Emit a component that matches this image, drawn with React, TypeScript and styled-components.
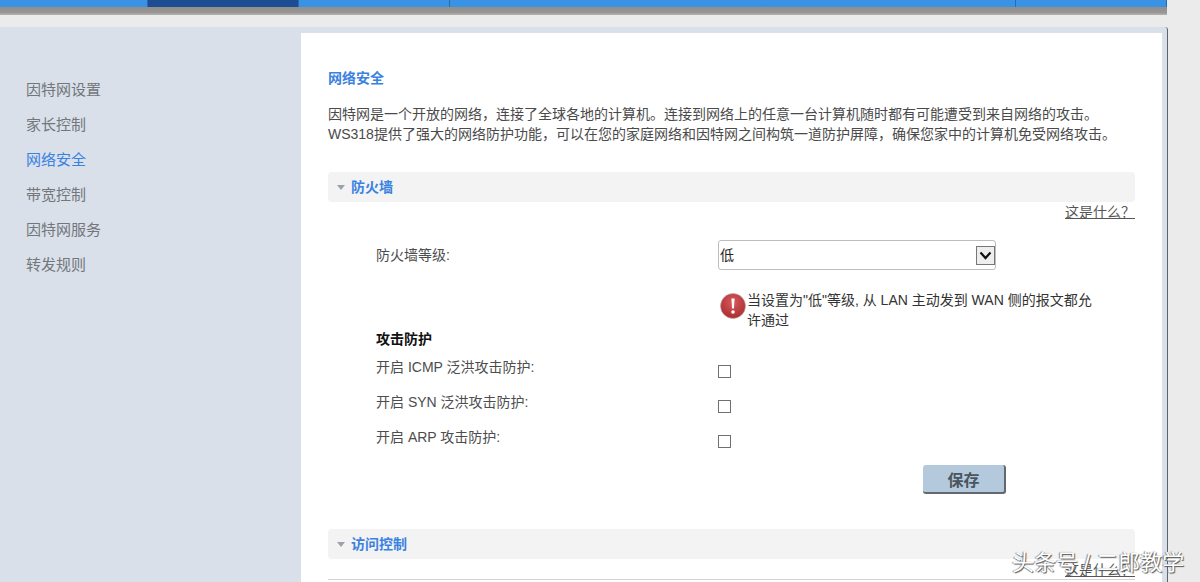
import { createGlobalStyle, styled } from "styled-components";

const CJK_SANS = `"Liberation Sans", "Noto Sans CJK SC", sans-serif`;

const GlobalStyle = createGlobalStyle`
  html, body {
    margin: 0;
    height: 582px;
    overflow: hidden;
    background: #ebebeb;
    font-family: ${CJK_SANS};
  }
`;

const Page = styled.div`
  position: relative;
  width: 1200px;
  height: 582px;
  overflow: hidden;
`;

const NavBar = styled.nav`
  display: flex;
  width: 1167px;
  height: 7px;
  background: #3a92e4;
`;

const NavTab = styled.div<{ $width: number; $active?: boolean }>`
  flex: 0 0 ${(p) => p.$width}px;
  box-sizing: border-box;
  border-right: 1px solid #2a6cab;
  background: ${(p) => (p.$active ? "#1c4d92" : "transparent")};
`;

const NavShadow = styled.div`
  width: 1167px;
  height: 8px;
  background: linear-gradient(#8f8f8f 0, #999693 70%, #b5b5b5 100%);
`;

const Main = styled.div`
  display: flex;
  box-sizing: border-box;
  width: 1168px;
  height: 555px;
  margin-top: 12px;
  background: #d9e0ea;
  border-right: 1px solid #5f6266;
  border-top-right-radius: 3px;
`;

const Sidebar = styled.ul`
  flex: 0 0 301px;
  box-sizing: border-box;
  margin: 0;
  padding: 44.5px 0 0 26px;
  list-style: none;
`;

const SideItem = styled.li<{ $active?: boolean }>`
  height: 35px;
  line-height: 35px;
  font-size: 15px;
  color: ${(p) => (p.$active ? "#3b82e0" : "#73767a")};
`;

const Panel = styled.main`
  flex: 0 0 861px;
  box-sizing: border-box;
  margin-top: 6px;
  padding: 36px 27px 0;
  background: #fff;
`;

const Title = styled.h1`
  margin: 0 0 16px;
  font-size: 14px;
  line-height: 19px;
  font-weight: 700;
  color: #3b82e0;
`;

const Intro = styled.p`
  margin: 0 0 28px;
  font-size: 14px;
  line-height: 20px;
  color: #4a4a4a;
  white-space: nowrap;
`;

const SectionHead = styled.div`
  display: flex;
  align-items: center;
  gap: 6px;
  box-sizing: border-box;
  height: 30px;
  padding: 0 0 2px 9px;
  border-radius: 4px;
  background: #f3f3f3;
  font-size: 14px;
  font-weight: 700;
  color: #3b82e0;
`;

const Caret = styled.span`
  width: 0;
  height: 0;
  border-left: 4.5px solid transparent;
  border-right: 4.5px solid transparent;
  border-top: 5px solid #9aa3ad;
  margin-top: 3px;
`;

const HelpRow = styled.div`
  display: flex;
  justify-content: flex-end;
  height: 38px;
  padding-top: 2px;
  box-sizing: border-box;
`;

const HelpLink = styled.a`
  font-size: 14px;
  line-height: 17px;
  color: #555;
  text-decoration: underline;
`;

const Form = styled.div`
  padding-left: 48px;
`;

const FieldRow = styled.div<{ $height: number }>`
  display: grid;
  grid-template-columns: 342px 1fr;
  align-items: center;
  height: ${(p) => p.$height}px;
`;

const Label = styled.label`
  font-size: 14px;
  color: #4d4d4d;
`;

const FieldLabel = styled(Label)`
  padding-bottom: 2px;
`;

const SelectBox = styled.div`
  display: flex;
  align-items: center;
  justify-content: space-between;
  box-sizing: border-box;
  width: 278px;
  height: 30px;
  padding: 0 0 0 1px;
  border: 1px solid #bdbdbd;
  border-radius: 3px;
  font-size: 14px;
  color: #222;
`;

const SelectValue = styled.span`
  padding-bottom: 3px;
`;

const SelectArrow = styled.span`
  display: flex;
  align-items: center;
  justify-content: center;
  box-sizing: border-box;
  width: 19px;
  height: 19px;
  border: 1px solid #777;
  background: #eeeeee;
`;

const Notice = styled.div`
  display: flex;
  margin: 20px 0 0 342px;
  width: 375px;
`;

const AlertIcon = styled.svg`
  flex: 0 0 29px;
  width: 29px;
  height: 28px;
  margin: 2px 0 0 0;
`;

const NoticeText = styled.p`
  margin: 0;
  font-size: 14px;
  line-height: 20px;
  color: #333;
`;

const SubHeading = styled.h2`
  margin: -1px 0 8px;
  font-size: 14px;
  line-height: 20px;
  font-weight: 700;
  color: #111;
`;

const CheckRow = styled.div`
  display: grid;
  grid-template-columns: 342px 1fr;
  height: 35px;
`;

const CheckLabel = styled(Label)`
  line-height: 19px;
  padding-top: 1px;
`;

const CheckBox = styled.span`
  display: block;
  box-sizing: border-box;
  width: 13px;
  height: 13px;
  margin-top: 8px;
  border: 1px solid #707070;
  background: #fff;
`;

const Actions = styled.div`
  display: flex;
  justify-content: flex-end;
  height: 64px;
  padding: 0 129px 0 0;
  margin-top: 3px;
`;

const SaveButton = styled.button`
  box-sizing: border-box;
  width: 83px;
  height: 29px;
  padding: 0;
  border: 0;
  border-right: 2px solid #62686e;
  border-bottom: 2px solid #62686e;
  border-radius: 3px;
  background: #b4cadc;
  font-family: inherit;
  font-size: 16px;
  font-weight: 700;
  color: #4a5560;
`;

const Divider = styled.div`
  height: 1px;
  margin-top: 20px;
  background: #d4d4d4;
`;

const Watermark = styled.div`
  position: absolute;
  left: 1012px;
  top: 549px;
  font-size: 22px;
  line-height: 28px;
  color: #fff;
  text-shadow: 1px 1px 1px #555, -1px 0 1px #888;
  white-space: nowrap;
`;

const FloatingHelp = styled(HelpLink)`
  position: absolute;
  left: 1065px;
  top: 562px;
`;

const tabs = [
  { width: 148 },
  { width: 151, active: true },
  { width: 151 },
  { width: 566 },
  { width: 151 },
];

const sideItems = ["因特网设置", "家长控制", "网络安全", "带宽控制", "因特网服务", "转发规则"];

const attackRows = ["开启 ICMP 泛洪攻击防护:", "开启 SYN 泛洪攻击防护:", "开启 ARP 攻击防护:"];

export default function App() {
  return (
    <Page>
      <GlobalStyle />
      <NavBar>
        {tabs.map((t, i) => (
          <NavTab key={i} $width={t.width} $active={t.active} />
        ))}
      </NavBar>
      <NavShadow />
      <Main>
        <Sidebar>
          {sideItems.map((item) => (
            <SideItem key={item} $active={item === "网络安全"}>
              {item}
            </SideItem>
          ))}
        </Sidebar>
        <Panel>
          <Title>网络安全</Title>
          <Intro>
            因特网是一个开放的网络，连接了全球各地的计算机。连接到网络上的任意一台计算机随时都有可能遭受到来自网络的攻击。
            <br />
            WS318提供了强大的网络防护功能，可以在您的家庭网络和因特网之间构筑一道防护屏障，确保您家中的计算机免受网络攻击。
          </Intro>
          <SectionHead>
            <Caret />
            防火墙
          </SectionHead>
          <HelpRow>
            <HelpLink>这是什么？</HelpLink>
          </HelpRow>
          <Form>
            <FieldRow $height={30}>
              <FieldLabel>防火墙等级:</FieldLabel>
              <SelectBox>
                <SelectValue>低</SelectValue>
                <SelectArrow>
                  <svg width="13" height="9" viewBox="0 0 13 9">
                    <path d="M1.5 1.5 6.5 7 11.5 1.5" fill="none" stroke="#111" strokeWidth="2.2" />
                  </svg>
                </SelectArrow>
              </SelectBox>
            </FieldRow>
            <Notice>
              <AlertIcon viewBox="0 0 29 28">
                <defs>
                  <radialGradient id="alert" cx="50%" cy="35%" r="70%">
                    <stop offset="0" stopColor="#d9595c" />
                    <stop offset="1" stopColor="#a82a2c" />
                  </radialGradient>
                </defs>
                <circle cx="15" cy="14" r="12.5" fill="url(#alert)" stroke="#b9b4b4" strokeWidth="0.6" />
                <path d="M13.4 6.5h3.2l-.6 10h-2z" fill="#fff" />
                <circle cx="15" cy="20" r="1.8" fill="#fff" />
              </AlertIcon>
              <NoticeText>当设置为"低"等级, 从 LAN 主动发到 WAN 侧的报文都允许通过</NoticeText>
            </Notice>
            <SubHeading>攻击防护</SubHeading>
            {attackRows.map((label) => (
              <CheckRow key={label}>
                <CheckLabel>{label}</CheckLabel>
                <CheckBox />
              </CheckRow>
            ))}
            <Actions>
              <SaveButton>保存</SaveButton>
            </Actions>
          </Form>
          <SectionHead>
            <Caret />
            访问控制
          </SectionHead>
          <Divider />
        </Panel>
      </Main>
      <FloatingHelp>这是什么？</FloatingHelp>
      <Watermark>头条号 / 二郎教学</Watermark>
    </Page>
  );
}
